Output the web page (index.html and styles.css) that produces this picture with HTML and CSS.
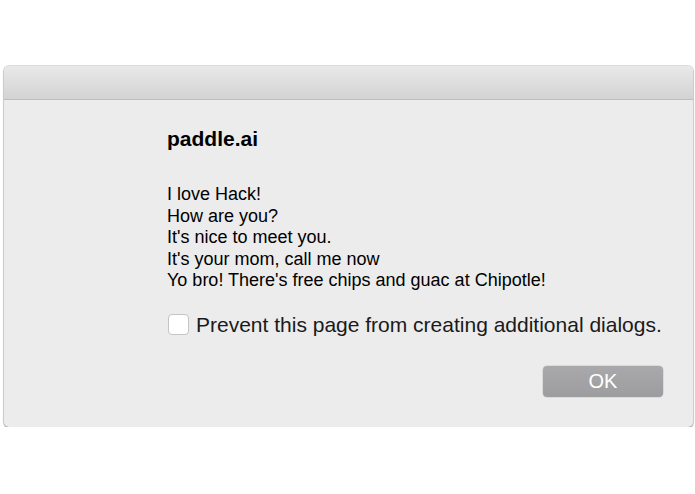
FILE: index.html
```html
<!DOCTYPE html>
<html>
<head>
<meta charset="utf-8">
<link rel="stylesheet" href="styles.css">
</head>
<body>
<div class="window">
  <div class="titlebar"></div>
  <div class="content">
    <div class="title">paddle.ai</div>
    <div class="message">
      <div>I love Hack!</div>
      <div>How are you?</div>
      <div>It's nice to meet you.</div>
      <div>It's your mom, call me now</div>
      <div>Yo bro! There's free chips and guac at Chipotle!</div>
    </div>
    <label class="prevent"><span class="box"></span><span>Prevent this page from creating additional dialogs.</span></label>
    <div class="actions"><button class="ok">OK</button></div>
  </div>
</div>
</body>
</html>
```

FILE: styles.css
```css
html, body {
  margin: 0;
  padding: 0;
  background: #ffffff;
  font-family: "Liberation Sans", Arial, sans-serif;
  overflow: hidden;
}
.window {
  margin: 66px 0 0 4px;
  width: 689px;
  height: 361px;
  background: #ececec;
  border-radius: 5px;
  box-shadow: 0 0 0 1px rgba(0,0,0,0.12), 0 1px 2px rgba(0,0,0,0.35);
  overflow: hidden;
  display: flex;
  flex-direction: column;
}
.titlebar {
  height: 33px;
  background: linear-gradient(#e9e9e9, #d3d3d3);
  border-bottom: 1px solid #bdbdbd;
  flex: none;
}
.content {
  padding: 27px 30px 0 163px;
  color: #000;
  flex: 1;
  display: flex;
  flex-direction: column;
}
.title {
  font-weight: bold;
  font-size: 21px;
  line-height: 24px;
}
.message {
  margin-top: 33px;
  font-size: 18px;
  line-height: 21.5px;
}
.prevent {
  margin-top: 20px;
  display: flex;
  align-items: center;
  gap: 7px;
  font-size: 21px;
  line-height: 26px;
  color: #1a1a1a;
}
.box {
  width: 21px;
  height: 21px;
  box-sizing: border-box;
  border: 1px solid #c4c4c4;
  border-radius: 4px;
  background: #ffffff;
  margin-left: 1px;
  flex: none;
}
.actions {
  margin-top: 28px;
  display: flex;
  justify-content: flex-end;
}
.ok {
  width: 120px;
  height: 31px;
  border: none;
  border-radius: 4px;
  background: linear-gradient(#a9a9ac, #9d9da0);
  box-shadow: 0 0 0 0.5px rgba(0,0,0,0.15);
  color: #ffffff;
  font-family: "Liberation Sans", Arial, sans-serif;
  font-size: 20px;
  padding: 0;
}
```
